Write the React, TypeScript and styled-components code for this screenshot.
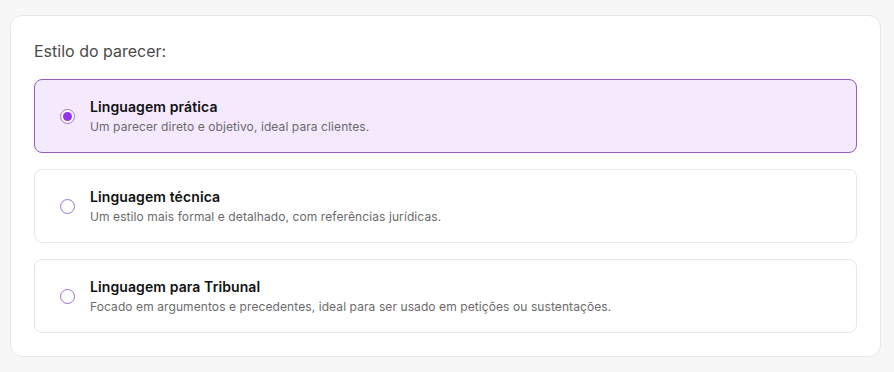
import React, { useState } from "react";
import styled, { createGlobalStyle } from "styled-components";

const GlobalStyle = createGlobalStyle`
  html, body { margin: 0; padding: 0; background: #f7f7f7; }
  body { font-family: Inter, "Noto Sans", sans-serif; }
  * { box-sizing: border-box; }
`;

const Page = styled.div`
  padding: 15px 13px 15px 10px;
`;

const Card = styled.div`
  background: #ffffff;
  border: 1px solid #e7e7e7;
  border-radius: 12px;
  padding: 23px 23px 23px 23px;
  display: flex;
  flex-direction: column;
`;

const Heading = styled.div`
  font-size: 16px;
  line-height: 24px;
  color: #4a4a4a;
  margin-bottom: 16px;
`;

const List = styled.div`
  display: flex;
  flex-direction: column;
  gap: 16px;
`;

const Option = styled.label<{ $selected: boolean }>`
  display: flex;
  align-items: center;
  gap: 15px;
  height: 74px;
  padding: 0 24px 0 25px;
  border-radius: 8px;
  border: 1px solid ${(p) => (p.$selected ? "#9c5cbf" : "#e8e8e8")};
  background: ${(p) => (p.$selected ? "#f5e9fe" : "#ffffff")};
  cursor: pointer;
`;

const Radio = styled.span<{ $selected: boolean }>`
  flex: none;
  width: 15px;
  height: 15px;
  border-radius: 50%;
  border: 1.5px solid #a070cf;
  display: flex;
  align-items: center;
  justify-content: center;
  background: #ffffff;
  &::after {
    content: "";
    width: 9px;
    height: 9px;
    border-radius: 50%;
    background: ${(p) => (p.$selected ? "#9333ea" : "transparent")};
  }
`;

const Texts = styled.div`
  display: flex;
  flex-direction: column;
  gap: 3px;
  padding-top: 1px;
`;

const Title = styled.div`
  font-size: 14px;
  line-height: 18px;
  font-weight: 600;
  color: #111111;
  letter-spacing: 0.1px;
`;

const Desc = styled.div`
  font-size: 12px;
  line-height: 16px;
  color: #6b6b6b;
  letter-spacing: 0.09px;
`;

const options = [
  { title: "Linguagem prática", desc: "Um parecer direto e objetivo, ideal para clientes." },
  { title: "Linguagem técnica", desc: "Um estilo mais formal e detalhado, com referências jurídicas." },
  {
    title: "Linguagem para Tribunal",
    desc: "Focado em argumentos e precedentes, ideal para ser usado em petições ou sustentações.",
  },
];

export default function App() {
  const [selected, setSelected] = useState(0);
  return (
    <>
      <GlobalStyle />
      <Page>
        <Card>
          <Heading>Estilo do parecer:</Heading>
          <List>
            {options.map((o, i) => (
              <Option key={o.title} $selected={selected === i} onClick={() => setSelected(i)}>
                <Radio $selected={selected === i} />
                <Texts>
                  <Title>{o.title}</Title>
                  <Desc>{o.desc}</Desc>
                </Texts>
              </Option>
            ))}
          </List>
        </Card>
      </Page>
    </>
  );
}
